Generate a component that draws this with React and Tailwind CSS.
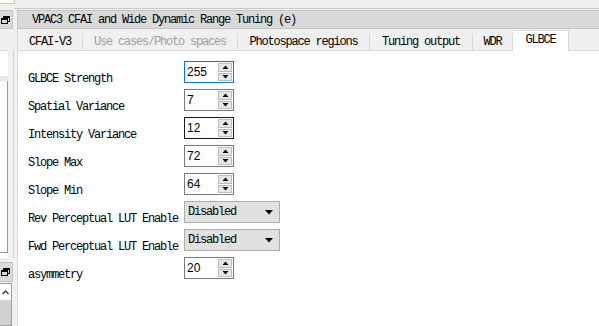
import React from "react";

const MONO = { fontFamily: '"Liberation Mono", "DejaVu Sans Mono", monospace' };
const SANS = { fontFamily: '"Liberation Sans", Arial, sans-serif' };

function RestoreIcon() {
  return (
    <svg width="9" height="8" viewBox="0 0 9 8" className="block">
      <rect x="2.5" y="0.5" width="6" height="5" fill="none" stroke="#000" />
      <rect x="2.5" y="0.5" width="6" height="1.5" fill="#000" />
      <rect x="0.5" y="2.5" width="6" height="5" fill="#dadada" stroke="#000" />
      <rect x="0.5" y="2.5" width="6" height="1.5" fill="#000" />
    </svg>
  );
}

function Tri({ up }) {
  return (
    <svg width="7" height="4" viewBox="0 0 7 4" className="block">
      {up ? <polygon points="0.5,4 6.5,4 3.5,0.5" fill="#000" /> : <polygon points="0.5,0 6.5,0 3.5,3.5" fill="#000" />}
    </svg>
  );
}

function Spin({ value, border }) {
  return (
    <div className={`w-[50px] h-[22px] bg-white border ${border} flex items-stretch`}>
      <div className="flex-1 flex items-center pl-[2px] text-[12px] text-black" style={SANS}>
        {value}
      </div>
      <div className="w-[15px] flex flex-col gap-[1px] py-[1px] pr-[1px]">
        <div className="h-[9px] bg-[#e6e6e6] border border-[#bcbcbc] flex items-center justify-center">
          <Tri up />
        </div>
        <div className="h-[9px] bg-[#e6e6e6] border border-[#bcbcbc] flex items-center justify-center">
          <Tri />
        </div>
      </div>
    </div>
  );
}

function Combo({ value }) {
  return (
    <div className="w-[96px] h-[22px] bg-[#e1e1e1] border border-[#adadad] flex items-center pl-[3px] pr-[6px] justify-between">
      <span className="text-[12px] tracking-[-1.2px] text-black" style={MONO}>
        {value}
      </span>
      <svg width="8" height="5" viewBox="0 0 8 5" className="block">
        <polygon points="0,0 8,0 4,4.5" fill="#000" />
      </svg>
    </div>
  );
}

function Row({ label, children }) {
  return (
    <div className="flex h-[28px] items-start">
      <div
        className="w-[156px] mt-[7px] h-[22px] leading-[22px] text-[12px] tracking-[-1.2px] text-black whitespace-nowrap"
        style={MONO}
      >
        {label}
      </div>
      {children}
    </div>
  );
}

const tabs = [
  { t: "CFAI-V3", w: "w-[65px]" },
  { t: "Use cases/Photo spaces", w: "w-[155px]", dis: true },
  { t: "Photospace regions", w: "w-[132px]" },
  { t: "Tuning output", w: "w-[103px]" },
  { t: "WDR", w: "w-[40px]" },
];

export default function App() {
  return (
    <div className="w-[599px] h-[326px] bg-[#f0f0f0] flex flex-col overflow-hidden relative">
      {/* top strip */}
      <div className="h-[9px] flex shrink-0">
        <div className="w-[15px] h-[4px] bg-[#fffdf0] border-r border-b border-[#c8c8c8]" />
        <div className="flex-1 border-b border-[#c8c8c8]" />
      </div>
      <div className="flex flex-1 min-h-0 pt-[1px]">
        {/* left strip */}
        <div className="w-[14px] flex flex-col shrink-0">
          <div className="w-[13px] h-[19px] bg-[#dadada] border border-l-0 border-[#c4c4c4] flex items-center pl-[1px]">
            <RestoreIcon />
          </div>
          <div className="h-[21px]" />
          <div className="h-[208px] flex border-r border-[#d4d4d4]">
            <div className="w-[8px] flex flex-col bg-white border-t border-[#d9d9d9]">
              <div className="h-[25px]" />
              <div className="h-[5px] bg-[#e8e8e8]" />
              <div className="h-[172px] border-r border-b border-[#9a9a9a] bg-white" />
            </div>
          </div>
          <div className="h-[4px]" />
          <div className="w-[13px] h-[20px] bg-[#dadada] border border-l-0 border-[#c4c4c4] flex items-center pl-[1px]">
            <RestoreIcon />
          </div>
          <div className="h-[1px]" />
          <div className="w-[12px] flex-1 border border-l-0 border-[#a0a0a0] bg-white flex flex-col">
            <div className="h-[16px] flex items-center justify-center">
              <svg width="7" height="5" viewBox="0 0 7 5" className="block">
                <polyline points="0.5,4 3.5,1 6.5,4" fill="none" stroke="#333" strokeWidth="1.3" />
              </svg>
            </div>
            <div className="flex-1 bg-[#d0d0d0]" />
          </div>
        </div>

        {/* main */}
        <div className="flex-1 flex flex-col ml-[3px] min-w-0">
          {/* title bar */}
          <div className="h-[19px] bg-[#d9d9d9] border border-r-0 border-[#c4c4c4] flex items-center pl-[14px] shrink-0">
            <span className="text-[12px] tracking-[-1.2px] text-black whitespace-nowrap" style={MONO}>
              VPAC3 CFAI and Wide Dynamic Range Tuning (e)
            </span>
          </div>
          {/* tabs */}
          <div className="h-[22px] flex items-end border-l border-[#d9d9d9] shrink-0">
            {tabs.map((x) => (
              <div
                key={x.t}
                className={`${x.w} h-[17px] border-r border-b border-[#d9d9d9] bg-[#f0f0f0] flex items-center justify-center text-[12px] tracking-[-1.2px] whitespace-nowrap ${
                  x.dis ? "text-[#a0a0a0]" : "text-black"
                }`}
                style={MONO}
              >
                {x.t}
              </div>
            ))}
            <div
              className="w-[56px] h-[21px] bg-white border border-b-0 border-[#d9d9d9] border-l-0 flex items-center justify-center text-[12px] tracking-[-1.2px] text-black pb-[2px]"
              style={MONO}
            >
              GLBCE
            </div>
            <div className="flex-1 h-[17px] border-b border-[#d9d9d9]" />
          </div>
          {/* content */}
          <div className="flex-1 bg-white border-l border-[#d9d9d9] pl-[10px] pt-[10px]">
            <Row label="GLBCE Strength">
              <Spin value="255" border="border-[#0078d7]" />
            </Row>
            <Row label="Spatial Variance">
              <Spin value="7" border="border-[#7a7a7a]" />
            </Row>
            <Row label="Intensity Variance">
              <Spin value="12" border="border-[#1a1a1a]" />
            </Row>
            <Row label="Slope Max">
              <Spin value="72" border="border-[#7a7a7a]" />
            </Row>
            <Row label="Slope Min">
              <Spin value="64" border="border-[#7a7a7a]" />
            </Row>
            <Row label="Rev Perceptual LUT Enable">
              <Combo value="Disabled" />
            </Row>
            <Row label="Fwd Perceptual LUT Enable">
              <Combo value="Disabled" />
            </Row>
            <Row label="asymmetry">
              <Spin value="20" border="border-[#7a7a7a]" />
            </Row>
          </div>
        </div>
      </div>
    </div>
  );
}
